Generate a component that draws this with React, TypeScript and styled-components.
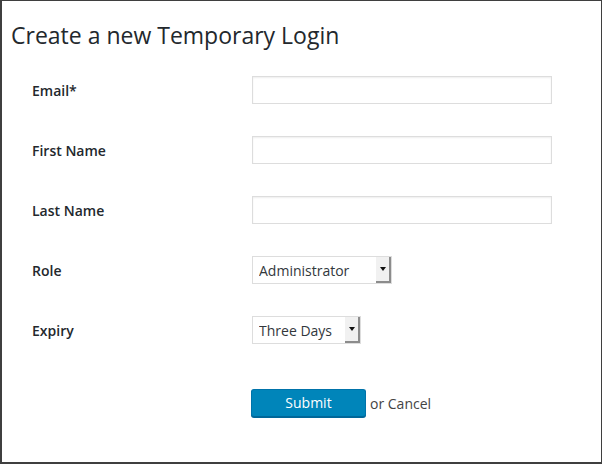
import * as React from 'react';
import styled, { createGlobalStyle } from 'styled-components';

const GlobalStyle = createGlobalStyle`
    html, body {
        margin: 0;
        padding: 0;
        background: #fff;
    }

    body {
        font-family: "Open Sans", "Liberation Sans", sans-serif;
    }
`;

const Frame = styled.div`
    width: 602px;
    height: 464px;
    box-sizing: border-box;
    border: 1px solid #3f3f3f;
    border-left-width: 2px;
    border-bottom-width: 2px;
    background: #fff;
`;

const Title = styled.h2`
    margin: 0;
    padding: 19px 0 0 9px;
    font-size: 23px;
    line-height: 30px;
    font-weight: 400;
    color: #23282d;
`;

const Form = styled.form`
    display: grid;
    grid-template-columns: 220px auto;
    row-gap: 32px;
    align-items: center;
    justify-items: start;
    margin-top: 26px;
    padding-left: 30px;
`;

const Label = styled.label`
    font-size: 14px;
    font-weight: 600;
    color: #23282d;
`;

const TextInput = styled.input`
    width: 300px;
    height: 28px;
    box-sizing: border-box;
    margin: 0;
    padding: 3px 5px;
    border: 1px solid #ddd;
    box-shadow: inset 0 1px 2px rgba(0, 0, 0, 0.07);
    background: #fff;
    font: 14px "Open Sans", sans-serif;
    color: #32373c;
    outline: none;
`;

const SelectBox = styled.div<{ $width: number }>`
    display: inline-flex;
    width: ${(p) => p.$width}px;
    height: 28px;
    box-sizing: border-box;
    border: 1px solid #ddd;
    background: #fff;
`;

const NativeSelect = styled.select`
    flex: 1;
    min-width: 0;
    appearance: none;
    margin: 0;
    padding: 0 0 0 6px;
    border: none;
    background: transparent;
    font: 14px "Open Sans", sans-serif;
    color: #32373c;
    outline: none;
`;

const ArrowButton = styled.span`
    display: flex;
    align-items: center;
    justify-content: center;
    width: 13px;
    box-sizing: content-box;
    background: #f1f1f1;
    border-right: 2px solid #8c8c8c;
    border-bottom: 2px solid #8c8c8c;

    &::after {
        content: '';
        border-left: 3px solid transparent;
        border-right: 3px solid transparent;
        border-top: 4px solid #111;
    }
`;

const Actions = styled.div`
    grid-column: 2;
    display: flex;
    align-items: center;
    gap: 4px;
    margin-top: 13px;
    margin-left: -1px;
`;

const SubmitButton = styled.button`
    width: 115px;
    height: 28px;
    box-sizing: border-box;
    padding: 0 0 1px;
    border: 1px solid #0073aa;
    border-bottom-color: #006799;
    border-radius: 3px;
    box-shadow: 0 1px 0 #006799;
    background: #0085ba;
    color: #fff;
    font: 14px "Open Sans", sans-serif;
    cursor: pointer;
`;

const CancelText = styled.span`
    font-size: 14px;
    color: #444;
`;

type SelectProps = {
    width: number;
    value: string;
    options: string[];
};

const FakeSelect = ({ width, value, options }: SelectProps): JSX.Element => (
    <SelectBox $width={width}>
        <NativeSelect defaultValue={value}>
            {options.map((o) => (
                <option key={o}>{o}</option>
            ))}
        </NativeSelect>
        <ArrowButton />
    </SelectBox>
);

const App = (): JSX.Element => (
    <>
        <GlobalStyle />
        <Frame>
            <Title>Create a new Temporary Login</Title>
            <Form onSubmit={(e) => e.preventDefault()}>
                <Label htmlFor="email">Email*</Label>
                <TextInput id="email" type="email" />

                <Label htmlFor="first">First Name</Label>
                <TextInput id="first" type="text" />

                <Label htmlFor="last">Last Name</Label>
                <TextInput id="last" type="text" />

                <Label>Role</Label>
                <FakeSelect
                    width={140}
                    value="Administrator"
                    options={['Administrator', 'Editor', 'Author', 'Contributor', 'Subscriber']}
                />

                <Label>Expiry</Label>
                <FakeSelect
                    width={109}
                    value="Three Days"
                    options={['One Hour', 'One Day', 'Three Days', 'One Week', 'One Month']}
                />

                <Actions>
                    <SubmitButton type="submit">Submit</SubmitButton>
                    <CancelText>or Cancel</CancelText>
                </Actions>
            </Form>
        </Frame>
    </>
);

export default App;
